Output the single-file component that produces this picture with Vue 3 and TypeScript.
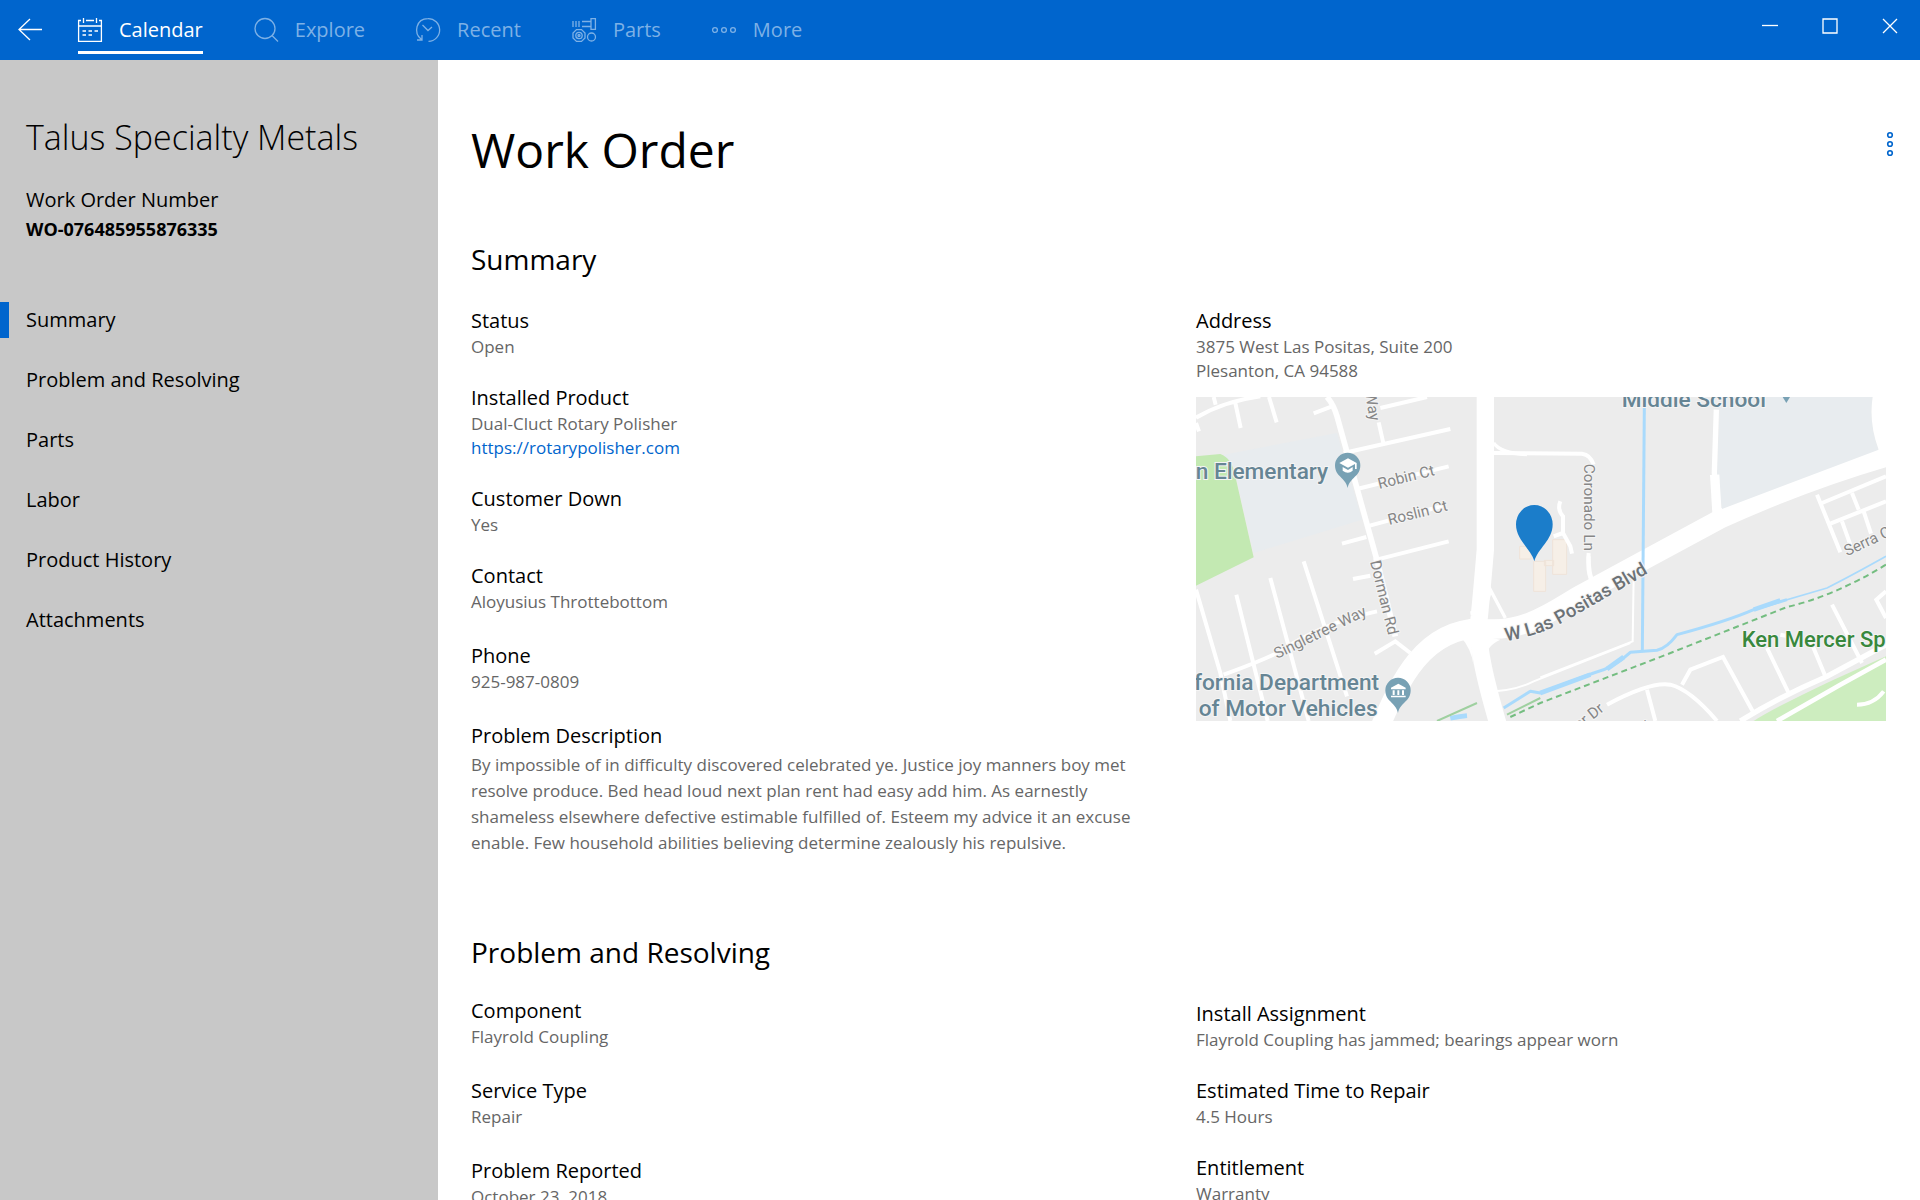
<script setup lang="ts">
import { ref } from 'vue'

interface Field {
  label: string
  lines: string[]
  link?: string
}

const tabs = ['Calendar', 'Explore', 'Recent', 'Parts', 'More']
const activeTab = ref('Calendar')

const sections = [
  { id: 'summary', name: 'Summary' },
  { id: 'problem', name: 'Problem and Resolving' },
  { id: 'parts', name: 'Parts' },
  { id: 'labor', name: 'Labor' },
  { id: 'history', name: 'Product History' },
  { id: 'attachments', name: 'Attachments' },
]
const activeSection = ref('summary')

const productFields: Field[] = [
  { label: 'Status', lines: ['Open'] },
  { label: 'Installed Product', lines: ['Dual-Cluct Rotary Polisher'], link: 'https://rotarypolisher.com' },
  { label: 'Customer Down', lines: ['Yes'] },
  { label: 'Contact', lines: ['Aloyusius Throttebottom'] },
]
const problemFields: Field[] = [
  { label: 'Component', lines: ['Flayrold Coupling'] },
  { label: 'Service Type', lines: ['Repair'] },
  { label: 'Problem Reported', lines: ['October 23, 2018'] },
]
const resolveFields: Field[] = [
  { label: 'Install Assignment', lines: ['Flayrold Coupling has jammed; bearings appear worn'] },
  { label: 'Estimated Time to Repair', lines: ['4.5 Hours'] },
  { label: 'Entitlement', lines: ['Warranty'] },
]
</script>

<template>
  <div class="app">
    <header class="topbar">
      <button class="back" type="button" aria-label="Back">
        <svg width="24" height="24" viewBox="0 0 24 24"><path d="M24 11.5H1M12 1 1 11.5 12 22" /></svg>
      </button>
      <nav class="tabs" aria-label="Main">
        <a
          v-for="tab in tabs"
          :key="tab"
          href="#"
          class="tab"
          :class="{ active: tab === activeTab }"
          @click.prevent="activeTab = tab"
        >
          <svg v-if="tab === 'Calendar'" width="24" height="24" viewBox="0 0 24 24">
            <path d="M3 2.5H.6v20.9h22.8V2.5H21M8 2.5h8M.6 8h22.8M5.5 0v5M18.5 0v5" />
            <path d="M4.500 13h3.500M10.500 13H14M16.500 13H20M4.500 17h3.500M10.500 17H14" />
          </svg>
          <svg v-else-if="tab === 'Explore'" width="24" height="24" viewBox="0 0 24 24">
            <circle cx="11" cy="10.500" r="10" /><path d="m18 17.500 6 6" />
          </svg>
          <svg v-else-if="tab === 'Recent'" width="24" height="24" viewBox="0 0 24 24">
            <path d="M5.500 21.500C-3 15 0 .6 12 .6A11.400 11.400 0 1 1 12.500 23.400M1 22h5v-5M6.500 7l5.500 5.500 4-3.500" />
          </svg>
          <svg v-else-if="tab === 'Parts'" width="24" height="24" viewBox="0 0 24 24">
            <path d="M1 3v6M4 3v6M7 3v6M10 3.500h9M10 8.500h9M19 .6h4.400v10.800H19zM4.500 11.600h5l3.500 3.500v4.800l-3.500 3.500h-5L1 19.900v-4.800z" />
            <circle cx="7" cy="17.500" r="3.200" /><circle cx="7" cy="17.500" r="1" /><circle cx="19.500" cy="19" r="4" />
          </svg>
          <svg v-else width="24" height="24" viewBox="0 0 24 24">
            <circle cx="3" cy="12" r="2.400" /><circle cx="12" cy="12" r="2.400" /><circle cx="21" cy="12" r="2.400" />
          </svg>
          <span>{{ tab }}</span>
        </a>
      </nav>
      <div class="window-buttons">
        <button type="button" aria-label="Minimize">
          <svg width="16" height="16" viewBox="0 0 16 16"><path d="M0 7.500h16" /></svg>
        </button>
        <button type="button" aria-label="Maximize">
          <svg width="16" height="16" viewBox="0 0 16 16"><path d="M1 1h14v14H1z" /></svg>
        </button>
        <button type="button" aria-label="Close">
          <svg width="16" height="16" viewBox="0 0 16 16"><path d="m1 1 14 14M15 1 1 15" /></svg>
        </button>
      </div>
    </header>

    <div class="body">
      <aside class="sidebar">
        <p class="company">Talus Specialty Metals</p>
        <p class="number-label">Work Order Number</p>
        <p class="number">WO-076485955876335</p>
        <nav class="sections" aria-label="Work order sections">
          <a
            v-for="section in sections"
            :key="section.id"
            :href="'#' + section.id"
            :class="{ active: section.id === activeSection }"
            @click="activeSection = section.id"
          >{{ section.name }}</a>
        </nav>
      </aside>

      <main class="content">
        <div class="heading">
          <h1>Work Order</h1>
          <button class="kebab" type="button" aria-label="More actions">
            <svg width="8" height="26" viewBox="0 0 8 26">
              <circle cx="4" cy="4" r="2.300" /><circle cx="4" cy="13" r="2.300" /><circle cx="4" cy="22" r="2.300" />
            </svg>
          </button>
        </div>

        <section id="summary">
          <h2>Summary</h2>
          <div class="columns">
            <div class="groups">
              <dl class="fields">
                <div v-for="field in productFields" :key="field.label">
                  <dt>{{ field.label }}</dt>
                  <dd v-for="line in field.lines" :key="line">{{ line }}</dd>
                  <dd v-if="field.link"><a :href="field.link">{{ field.link }}</a></dd>
                </div>
              </dl>
              <dl class="fields loose">
                <div>
                  <dt>Phone</dt>
                  <dd>925-987-0809</dd>
                </div>
                <div>
                  <dt>Problem Description</dt>
                  <dd class="description">
                    By impossible of in difficulty discovered celebrated ye. Justice joy manners boy met resolve
                    produce. Bed head loud next plan rent had easy add him. As earnestly shameless elsewhere defective
                    estimable fulfilled of. Esteem my advice it an excuse enable. Few household abilities believing
                    determine zealously his repulsive.
                  </dd>
                </div>
              </dl>
            </div>
            <div>
              <dl class="fields">
                <div>
                  <dt>Address</dt>
                  <dd>3875 West Las Positas, Suite 200</dd>
                  <dd>Plesanton, CA 94588</dd>
                </div>
              </dl>
              <svg class="map" viewBox="0 0 2070 972" role="img" aria-label="Map of the work order address">
                <rect width="2070" height="972" fill="#ececec" />
                <!-- western half -->
                <g transform="translate(-47 -322)">
                  <path d="M130 495 470 430 545 690 220 790 160 530z" fill="#e8ecef" />
                  <path d="M47 500 120 493Q155 505 165 560L220 803 47 888z" fill="#c3e9b2" />
                  <g class="road minor">
                    <path d="M47 384Q130 335 240 320M100 322 106 345M165 340 181 415M266 322 289 398M47 400 56 425" />
                    <path d="M400 371 455 350M595 398 610 465M600 355 740 322M490 490 810 418" />
                    <path d="M530 598 805 530M560 710 790 648M485 762 558 742M580 812 805 755M518 868 570 858" />
                    <path d="M47 900 120 1150 150 1294M168 915 262 1294M270 865 385 1294M370 815 500 1220M130 1155Q240 1115 290 1090C380 1030 470 990 590 965" />
                    <path d="M583 1092 645 1055 690 1090" />
                    <path class="lane" d="M920 1205Q1000 1205 1060 1175L1350 1060" />
                    <path d="M940 490 1205 492Q1230 495 1240 525M1225 800Q1225 860 1240 880" />
                  </g>
                  <g class="road">
                    <path d="M440 322Q460 345 470 380L590 812 645 1040" stroke-width="17" />
                    <path d="M915 322V780Q905 900 897 980C885 1060 920 1190 955 1310" stroke-width="52" />
                    <path d="M600 1310C660 1170 730 1020 900 1015 1030 1035 1130 955 1200 915L1385 815 1620 688Q1880 570 2125 500" stroke-width="58" />
                    <path d="M870 970Q920 965 930 900L975 985M940 460Q960 490 1040 495" stroke-width="10" />
                  </g>
                  <path d="M840 1040Q875 1080 880 1130L870 1030zM960 1050Q915 1070 918 1110L910 1040z" fill="#fff" />
                  <g fill="#f6efe7" stroke="#efe3d8" stroke-width="3">
                    <path d="M1018 770h34v38h-34zM1060 815h36v90h-36zM1117 750h42v104h-42zM1092 812h28v16h-28z" />
                  </g>
                </g>
                <!-- eastern half -->
                <g transform="translate(1033 -52)">
                  <path d="M540 52H997Q985 130 1015 210L545 388 530 280z" fill="#e8ecef" />
                  <path d="M997 52H1040V220L1015 210Q985 130 997 52z" fill="#fff" />
                  <path d="M640 1024Q700 985 880 900L1037 830V1024z" fill="#cdedbf" />
                  <g class="road minor">
                    <path d="M145 520Q140 580 155 605M60 365Q50 390 68 410V460L90 500 95 522M68 460 40 470" />
                    <path class="lane" d="M280 590 277 785 0 893" />
                    <path d="M830 345 900 518M845 370 1037 290M870 432 1037 365M935 340 955 390M905 425 930 495M970 395 992 462" />
                    <path d="M200 975Q330 905 390 915 450 930 530 1024M425 915 450 870 548 832 640 1000M320 930 345 1024M680 805 745 940M805 770 855 890M875 675 965 850M1037 635 1008 660 1037 715M720 765 745 770" />
                    <path d="M950 975Q1000 975 1030 935" />
                  </g>
                  <g class="road">
                    <path d="M528 90 522 280 533 400" stroke-width="16" />
                    <path d="M523 285 530 400" stroke-width="28" />
                    <path d="M600 1024Q720 950 860 890L1037 795" stroke-width="16" />
                    <path d="M710 1024 900 915 1037 840" stroke-width="14" />
                  </g>
                  <g class="river">
                    <path d="M312 85 306 815" stroke-width="9" />
                    <path d="M1037 530Q930 590 860 625L640 690" stroke-width="5" />
                    <path d="M740 660 640 690Q560 725 410 765 380 805 350 812L270 818Q220 865 160 880L0 940-30 935-110 985" stroke-width="9" />
                    <path d="M-270 1016Q-240 1010-220 1008M640 690 720 662M250 832 200 868M0 940 150 885" stroke-width="14" />
                  </g>
                  <path class="trail" d="M1037 555Q880 650 740 682L370 828 0 970-90 1012" />
                  <path d="M-310 1024-190 970M-100 1005 0 955" stroke="#9fd0a0" stroke-width="6" />
                </g>
                <!-- place names -->
                <g class="map-text">
                  <g class="place">
                    <text x="-1" y="246">n Elementary</text>
                    <text x="-6" y="880">fornia Department</text>
                    <text x="8" y="957">of Motor Vehicles</text>
                    <text x="1277" y="30">Middle School</text>
                  </g>
                  <text class="park" x="1637" y="750">Ken Mercer Sp</text>
                  <g class="street">
                    <text transform="translate(507 -12) rotate(80)">Way</text>
                    <text transform="translate(550 276) rotate(-14)">Robin Ct</text>
                    <text transform="translate(580 384) rotate(-14)">Roslin Ct</text>
                    <text transform="translate(522 494) rotate(76)">Dorman Rd</text>
                    <text transform="translate(243 786) rotate(-26)">Singletree Way</text>
                    <text transform="translate(1165 200) rotate(90)">Coronado Ln</text>
                    <text transform="translate(1953 478) rotate(-25)">Serra Ct</text>
                    <text transform="translate(1150 1000) rotate(-38)">er Dr</text>
                    <text transform="translate(1366 990) rotate(-75)">r</text>
                  </g>
                  <path id="blvd" d="M930 732Q1040 715 1123 664L1430 486" fill="none" />
                  <text class="boulevard"><textPath href="#blvd">W Las Positas Blvd</textPath></text>
                </g>
                <!-- pins -->
                <g fill="#78a1b4">
                  <path d="M455 273C448 240 417 240 417 205a38 38 0 0 1 76 0C493 240 462 240 455 273z" />
                  <path d="M606 948C599 915 568 915 568 880a38 38 0 0 1 76 0C644 915 613 915 606 948z" />
                  <path d="M1760 0h22l-11 18z" />
                </g>
                <g fill="#fff">
                  <path d="m430 198 26-14 26 14v18h-5v-15l-21 11zM440 210l16 9 14-9v11q-14 12-30 0z" />
                  <path d="m585 872 22-12 22 12v5h-44zM590 880h6v14h-6zM604 880h6v14h-6zM618 880h6v14h-6zM585 896h44v5h-44z" />
                </g>
                <path d="M1015 493C1005 455 960 430 960 382a55 58 0 0 1 110 0C1070 430 1025 455 1015 493z" fill="#1b7dca" />
              </svg>
            </div>
          </div>
        </section>

        <section id="problem" class="problem">
          <h2>Problem and Resolving</h2>
          <div class="columns">
            <dl class="fields loose">
              <div v-for="field in problemFields" :key="field.label">
                <dt>{{ field.label }}</dt>
                <dd v-for="line in field.lines" :key="line">{{ line }}</dd>
              </div>
            </dl>
            <dl class="fields lowered">
              <div v-for="field in resolveFields" :key="field.label">
                <dt>{{ field.label }}</dt>
                <dd v-for="line in field.lines" :key="line">{{ line }}</dd>
              </div>
            </dl>
          </div>
        </section>
      </main>
    </div>
  </div>
</template>

<style>
body {
  margin: 0;
}
</style>

<style scoped>
.app {
  display: flex;
  flex-direction: column;
  height: 100vh;
  font-family: "Open Sans", "Noto Sans", sans-serif;
  color: #000;
  background: #fff;
}
h1,
h2,
p,
dl,
dd {
  margin: 0;
  font-weight: 400;
}
button {
  display: flex;
  padding: 0;
  border: 0;
  background: none;
  color: inherit;
}
.topbar svg,
.kebab svg {
  display: block;
  fill: none;
  stroke: currentColor;
  stroke-width: 1.3;
  overflow: visible;
}
.topbar {
  display: flex;
  flex: none;
  height: 60px;
  color: #fff;
  background: #0065cd;
}
.back {
  align-items: center;
  padding: 0 18px;
}
.tabs {
  display: flex;
  flex: 1;
  gap: 51px;
  padding-left: 18px;
}
.tab {
  display: flex;
  align-items: center;
  gap: 17px;
  height: 54px;
  padding-top: 8px;
  border-bottom: 3px solid transparent;
  box-sizing: border-box;
  font-size: 20px;
  line-height: 28px;
  text-decoration: none;
  color: #7db1e6;
}
.tab.active {
  color: #fff;
  border-color: #fff;
}
.window-buttons {
  display: flex;
}
.window-buttons button {
  align-items: center;
  justify-content: center;
  width: 60px;
  height: 51px;
}
.body {
  display: flex;
  flex: 1;
  min-height: 0;
}
.sidebar {
  flex: none;
  width: 438px;
  padding-top: 53px;
  box-sizing: border-box;
  background: #c8c8c8;
}
.sidebar p {
  padding-left: 26px;
}
.company {
  font-size: 34px;
  line-height: 48px;
  font-weight: 300;
}
.number-label {
  margin-top: 24px;
  font-size: 20px;
  line-height: 30px;
}
.sidebar .number {
  font-size: 18px;
  line-height: 28px;
  font-weight: 700;
}
.sections {
  display: flex;
  flex-direction: column;
  gap: 24px;
  margin-top: 59px;
}
.sections a {
  padding-left: 17px;
  border-left: 9px solid transparent;
  font-size: 20px;
  line-height: 36px;
  color: #000;
  text-decoration: none;
}
.sections a.active {
  border-color: #0065cd;
}
.content {
  flex: 1;
  min-width: 0;
  padding: 54px 34px 0 33px;
  overflow: auto;
  scrollbar-width: none;
}
.heading {
  display: flex;
  justify-content: space-between;
}
h1 {
  font-size: 48px;
  line-height: 72px;
}
.kebab {
  align-self: flex-start;
  margin: 17px -8px 0 0;
  color: #0065cd;
}
.kebab svg {
  stroke-width: 1.6;
}
h2 {
  margin-top: 53px;
  font-size: 28px;
  line-height: 40px;
}
.columns {
  display: grid;
  grid-template-columns: minmax(0, 725fr) minmax(0, 690fr);
  align-items: start;
  margin-top: 28px;
}
.groups,
.fields {
  display: flex;
  flex-direction: column;
  gap: 25px;
}
.groups,
.fields.loose {
  gap: 28px;
}
dt {
  font-size: 20px;
  line-height: 28px;
}
dd {
  font-size: 17px;
  line-height: 24px;
  color: #666;
}
dd a {
  color: #0065cd;
  text-decoration: none;
}
.description {
  max-width: 670px;
  margin-top: 2px;
  line-height: 26px;
}
.map {
  display: block;
  width: 100%;
  margin-top: 14px;
}
.problem h2 {
  margin-top: 76px;
}
.problem .columns {
  margin-top: 25px;
}
.lowered {
  padding-top: 3px;
}
.road path {
  fill: none;
  stroke: #fff;
}
.minor path {
  stroke-width: 12;
}
.minor .lane {
  stroke-width: 6;
}
.river path {
  fill: none;
  stroke: #a9dafc;
  stroke-linejoin: round;
}
.trail {
  fill: none;
  stroke: #74bd80;
  stroke-width: 6;
  stroke-dasharray: 18 12;
}
.map-text text {
  font-family: Roboto, sans-serif;
  paint-order: stroke;
  stroke: #f4f4f4;
  stroke-width: 6px;
}
.place text {
  font-size: 68px;
  font-weight: 500;
  fill: #668594;
}
.map-text .park {
  font-size: 66px;
  font-weight: 500;
  fill: #38883d;
}
.street text {
  font-size: 46px;
  fill: #868686;
}
.map-text .boulevard {
  font-size: 56px;
  font-weight: 500;
  fill: #6c7276;
}
</style>
